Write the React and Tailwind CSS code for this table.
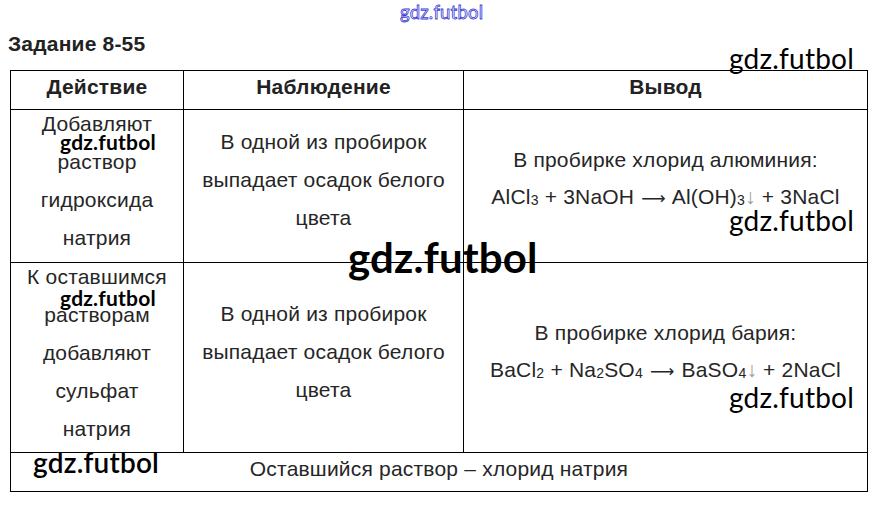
import React from 'react';

// watermark labels lying over the page
const Mark = ({ className, children }) => (
  <div className={`absolute whitespace-nowrap font-['Lato',sans-serif] text-black leading-none ${className}`}>
    {children}
  </div>
);

const Sub = ({ children }) => <span className="text-[14px] align-[-1px]">{children}</span>;

const Arrow = () => <span className="font-['DejaVu_Sans',sans-serif] text-[17px] leading-none mx-[1px]">⟶</span>;

const App = () => {
  return (
    <div className="relative w-[882px] h-[507px] bg-white overflow-hidden font-['Liberation_Sans',Arial,sans-serif] text-[#262626] tracking-[0.2px]">
      {/* title */}
      <div className="h-[70px] pt-[32px] pl-[8px]">
        <h1 className="text-[21px] font-bold leading-[24px] text-[#222]">Задание 8-55</h1>
      </div>

      {/* table */}
      <div className="ml-[10px] w-[858px] border-t border-black">
        <div className="grid grid-cols-[173px_280px_405px] h-[39px] border-b border-black text-[21px] font-bold text-[#222]">
          <div className="border-l border-black flex items-center justify-center pb-[6px]">Действие</div>
          <div className="border-l border-black flex items-center justify-center pb-[6px]">Наблюдение</div>
          <div className="border-l border-r border-black flex items-center justify-center pb-[6px]">Вывод</div>
        </div>

        <div className="grid grid-cols-[173px_280px_405px] h-[153px] border-b border-black text-[21px]">
          <div className="border-l border-black text-center leading-[38px] -mt-[5px]">
            <div>Добавляют</div>
            <div>раствор</div>
            <div>гидроксида</div>
            <div>натрия</div>
          </div>
          <div className="border-l border-black flex flex-col justify-center text-center leading-[38px] pb-[12px]">
            <div>В одной из пробирок</div>
            <div>выпадает осадок белого</div>
            <div>цвета</div>
          </div>
          <div className="border-l border-r border-black flex flex-col justify-center text-center leading-[37px] pb-[12px]">
            <div>В пробирке хлорид алюминия:</div>
            <div>AlCl<Sub>3</Sub> + 3NaOH <Arrow /> Al(OH)<Sub>3</Sub><span className="text-[#999]">↓</span> + 3NaCl</div>
          </div>
        </div>

        <div className="grid grid-cols-[173px_280px_405px] h-[190px] border-b border-black text-[21px]">
          <div className="border-l border-black text-center leading-[38px] -mt-[5px]">
            <div>К оставшимся</div>
            <div>растворам</div>
            <div>добавляют</div>
            <div>сульфат</div>
            <div>натрия</div>
          </div>
          <div className="border-l border-black flex flex-col justify-center text-center leading-[38px] pb-[12px]">
            <div>В одной из пробирок</div>
            <div>выпадает осадок белого</div>
            <div>цвета</div>
          </div>
          <div className="border-l border-r border-black flex flex-col justify-center text-center leading-[37px] pb-[10px]">
            <div>В пробирке хлорид бария:</div>
            <div>BaCl<Sub>2</Sub> + Na<Sub>2</Sub>SO<Sub>4</Sub> <Arrow /> BaSO<Sub>4</Sub><span className="text-[#999]">↓</span> + 2NaCl</div>
          </div>
        </div>

        <div className="h-[39px] border-l border-r border-b border-black flex items-center justify-center text-[21px] pb-[6px]">
          Оставшийся раствор – хлорид натрия
        </div>
      </div>

      {/* watermarks */}
      <Mark className="left-[400px] top-[3px] text-[18.5px] text-transparent [-webkit-text-stroke:0.8px_#3a3ad6]">gdz.futbol</Mark>
      <Mark className="left-[729px] top-[44px] text-[28px]">gdz.futbol</Mark>
      <Mark className="left-[60px] top-[131px] text-[21px] font-bold">gdz.futbol</Mark>
      <Mark className="left-[348px] top-[236px] text-[42px] font-bold">gdz.futbol</Mark>
      <Mark className="left-[729px] top-[206px] text-[28px]">gdz.futbol</Mark>
      <Mark className="left-[60px] top-[287px] text-[21px] font-bold">gdz.futbol</Mark>
      <Mark className="left-[729px] top-[383px] text-[28px]">gdz.futbol</Mark>
      <Mark className="left-[33px] top-[448px] text-[28px] font-semibold">gdz.futbol</Mark>
    </div>
  );
};

export default App;
